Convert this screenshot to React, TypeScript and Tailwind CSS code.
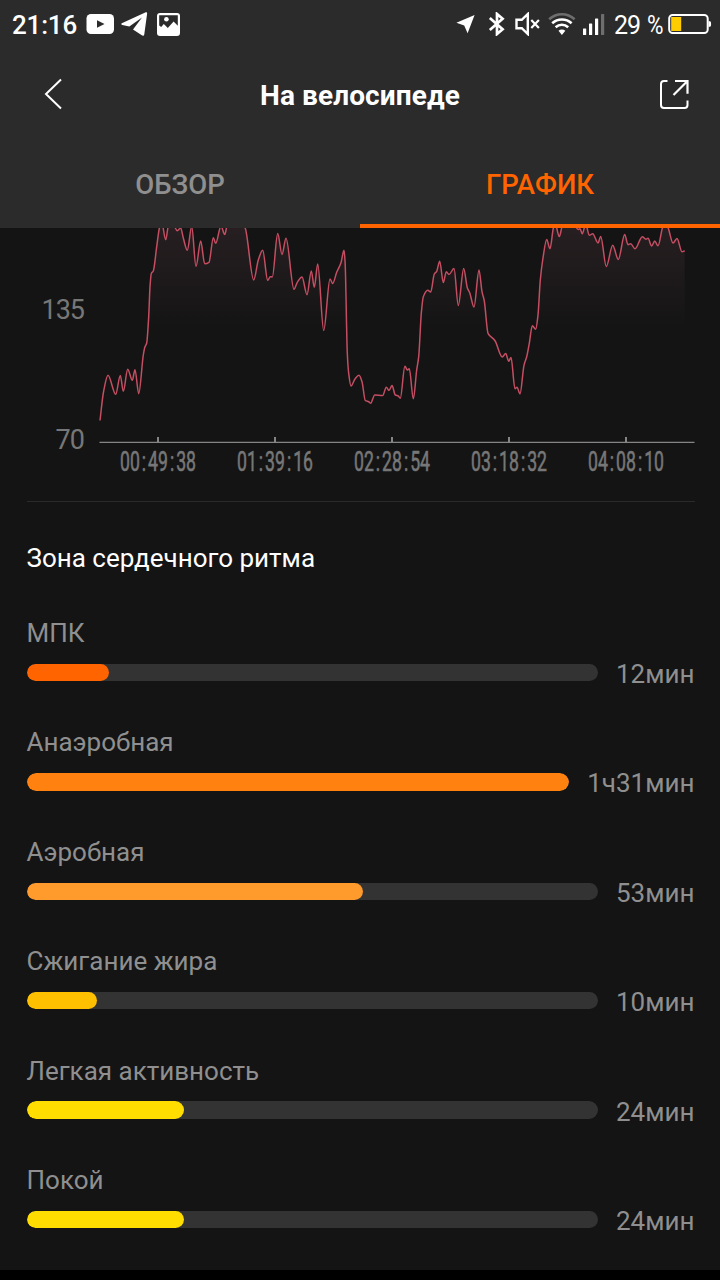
import clsx from "clsx"

interface Zone {
  name: string
  value: string
  percent: number
  color: string
}

const zones: Zone[] = [
  { name: "МПК", value: "12мин", percent: 14.5, color: "bg-[#ff6400]" },
  { name: "Анаэробная", value: "1ч31мин", percent: 100, color: "bg-[#ff8210]" },
  { name: "Аэробная", value: "53мин", percent: 58.9, color: "bg-[#ff9a2c]" },
  { name: "Сжигание жира", value: "10мин", percent: 12.4, color: "bg-[#ffc000]" },
  { name: "Легкая активность", value: "24мин", percent: 27.5, color: "bg-[#ffdd00]" },
  { name: "Покой", value: "24мин", percent: 27.5, color: "bg-[#ffdd00]" },
]

const timeLabels = [
  { x: 158, label: "00:49:38" },
  { x: 275, label: "01:39:16" },
  { x: 392, label: "02:28:54" },
  { x: 509, label: "03:18:32" },
  { x: 626, label: "04:08:10" },
]

// heart rate samples, the top of the curve is scrolled under the header
const samples: [number, number][] = [
  [100, 420.5], [103.5, 392], [108, 375.3], [115.7, 394.3], [120.3, 375.5], [123.3, 391.3], [127.7, 369.3],
  [132.3, 380.3], [135, 369.7], [138.7, 393.7], [143.3, 355], [144.7, 347.7], [146.7, 343], [148.7, 316.7],
  [150, 286.7], [151.3, 273.5], [153.3, 271], [156.7, 246.7], [159.3, 228.3], [161.5, 221], [165.7, 239.7],
  [168.5, 225], [172, 222], [177.3, 230.7], [180.7, 228], [183.3, 238], [187.3, 250.3], [191.7, 226.5],
  [196, 266.5], [200.7, 241], [204.7, 263.7], [209, 262.3], [213.3, 237.7], [215.7, 243.3], [221, 226],
  [224.7, 234.5], [228, 222], [241, 221], [245.3, 228.3], [253.7, 279.9], [258.3, 260], [262.7, 250.3],
  [267.7, 280.3], [270.3, 276.7], [272.3, 277], [277.7, 233.5], [282, 254.5], [286, 238.3], [294, 289.3],
  [297.3, 282.3], [302, 277], [307, 294.7], [311.3, 271], [314.3, 287.3], [317.7, 264], [323.7, 330.5],
  [330, 279], [332.7, 283.5], [336.7, 272.3], [341, 262.7], [344, 250.3], [345.1, 262], [347.3, 353.3],
  [348.7, 373.3], [351, 386], [355, 379], [359, 375.3], [362, 381.7], [365.3, 400.5], [368.7, 401.7],
  [370.7, 403.2], [374.7, 394.9], [382.7, 395.5], [386.3, 387.2], [389, 390.5], [392, 385.5], [395.3, 395],
  [398.3, 396], [400.3, 398.2], [404.9, 366.2], [407.3, 370], [409.3, 368.7], [413.3, 398.8], [416.7, 370],
  [418.7, 356.7], [421.3, 313.3], [423.3, 296.7], [427.7, 290.3], [430.7, 292], [434.3, 274], [436.7, 271.3],
  [439.7, 261.3], [443.3, 282.5], [446.3, 271.7], [449, 274.5], [454, 268.5], [458.3, 305.5], [463.7, 268.5],
  [467.3, 287.7], [469.7, 292.7], [474, 307], [479, 270], [482, 291.7], [484.3, 301], [488, 333.3],
  [495, 340.7], [502.3, 357], [505.7, 353.5], [508.7, 361.2], [511, 357.5], [515, 388.7], [517, 387.3],
  [520, 393.9], [524, 365.3], [526.7, 356.7], [529.3, 343.3], [532.3, 325.8], [535.7, 329.2], [538, 315],
  [540.3, 280], [542.7, 260], [546.7, 239.5], [550, 248.7], [553.3, 228.3], [555, 223], [559.3, 236.5],
  [562.7, 225], [573, 223], [578.3, 229.5], [580, 228.7], [582.3, 233.8], [585.7, 224], [589.3, 235.3],
  [592.7, 233.7], [598, 243], [600.7, 236.5], [606.3, 266.5], [612.7, 245.3], [618.3, 259.5], [624.7, 234.5],
  [628, 244.7], [630.7, 243.7], [635, 248.8], [642.3, 236.7], [646, 239.2], [648, 238.3], [651.7, 246],
  [654.7, 241], [658, 245.8], [662.7, 227], [665.5, 222], [668.3, 228.3], [673, 243], [677, 238.5],
  [682, 251.8], [684.7, 250.7],
]

// monotone cubic curve, flat at every peak and valley
function buildCurve(points: [number, number][]) {
  const slope = (i: number) => (points[i + 1][1] - points[i][1]) / (points[i + 1][0] - points[i][0])
  const tangents = points.map((_, i) => {
    if (i === 0) return slope(0)
    if (i === points.length - 1) return slope(i - 1)
    const a = slope(i - 1)
    const b = slope(i)
    return a * b <= 0 ? 0 : (2 * a * b) / (a + b)
  })
  let d = `M${points[0][0]} ${points[0][1]}`
  for (let i = 1; i < points.length; i++) {
    const [x0, y0] = points[i - 1]
    const [x1, y1] = points[i]
    const dx = (x1 - x0) / 3
    d += `C${x0 + dx} ${y0 + dx * tangents[i - 1]} ${x1 - dx} ${y1 - dx * tangents[i]} ${x1} ${y1}`
  }
  return d
}

const curve = buildCurve(samples)

function StatusBar() {
  return (
    <div className="flex h-12 items-center justify-between pl-3 pr-2 text-[26px] leading-none">
      <div className="flex items-center">
        <span className="w-[74px] pt-0.5 font-medium tracking-[-0.2px]">21:16</span>
        <svg width="28" height="24" viewBox="0 0 28 24">
          <rect x="0.5" y="2" width="27.5" height="20" rx="4.5" fill="#fff" />
          <path d="M11 8.3v7.4l7.5-3.7z" fill="#2b2b2b" />
        </svg>
        <svg className="ml-[7px]" width="27" height="26" viewBox="0 0 27 26">
          <path
            d="M.8 12.2 24.2 1.4c1.3-.5 2.1 0 1.9 1.4l-2.8 20.4c-.3 1.6-1.3 1.9-2.5 1.1L12 18.6l9-12.1-12.7 8.9-7-1.3c-1.2-.4-1.5-1.3-.5-1.9z"
            fill="#fff"
          />
        </svg>
        <svg className="ml-[9px]" width="24" height="24" viewBox="0 0 24 24">
          <rect x="0" y="1" width="23" height="23" rx="3" fill="#fff" />
          <path d="M2.2 3.2h18.6v10.6l-4.2-4.4-5.8 6.6-4-4-2.6 3-2-1.6z" fill="#2b2b2b" />
          <circle cx="9.4" cy="7.2" r="2.3" fill="#fff" />
        </svg>
      </div>
      <div className="flex items-center">
        <svg width="20" height="24" viewBox="0 0 20 24">
          <path d="M18.6 3 0.4 10.7l7.8 2.8 3.4 7.8z" fill="#fff" />
        </svg>
        <svg className="ml-[12px]" width="18" height="24" viewBox="0 0 18 24" fill="none" stroke="#fff" strokeWidth="2.7">
          <path d="M1.8 6 14.6 17.2 9 22V2l5.6 4.8L1.8 18" />
        </svg>
        <svg className="ml-[9px]" width="26" height="24" viewBox="0 0 26 24" fill="none" stroke="#fff">
          <path d="M1.5 7.8h5.3L12.8 2v20l-6-5.8H1.5z" strokeWidth="2.4" />
          <path d="m16.3 8 7.6 8M23.9 8l-7.6 8" strokeWidth="2.2" />
        </svg>
        <svg className="ml-[7px]" width="28" height="24" viewBox="0 0 28 24" fill="none" strokeWidth="2.6">
          <path d="M1.2 7.3C8.5.5 19.3.5 26.6 7.3" stroke="#6e6e6e" />
          <path d="M4.2 11.3c5.6-5.1 13.8-5.1 19.4 0M7.6 15.2c3.7-3.3 8.9-3.3 12.6 0" stroke="#fff" />
          <path d="M10.5 18.7c2-1.7 4.8-1.7 6.8 0L13.9 23z" fill="#fff" />
        </svg>
        <svg className="ml-[7px]" width="22" height="24" viewBox="0 0 22 24" fill="#fff">
          <rect x="0" y="16.5" width="3.2" height="6.5" rx="0.6" />
          <rect x="6" y="11.5" width="3.2" height="11.5" rx="0.6" />
          <rect x="12" y="6.5" width="3.2" height="16.5" rx="0.6" />
          <rect x="18" y="2" width="3.2" height="21" rx="0.6" fill="#6e6e6e" />
        </svg>
        <span className="ml-[9px] flex w-[54px] gap-[7px] whitespace-nowrap pt-0.5 text-[25px] tracking-[-1px]">
          <span>29</span>
          <span className="origin-left scale-x-90">%</span>
        </span>
        <svg width="44" height="24" viewBox="0 0 44 24">
          <rect x="1.2" y="3" width="38.5" height="18" rx="3.5" fill="none" stroke="#fff" strokeWidth="2" />
          <rect x="3.2" y="5" width="10" height="14" fill="#ffcc00" />
          <path d="M40.5 9c2 0 2.6.6 2.6 3s-.6 3-2.6 3z" fill="#fff" />
        </svg>
      </div>
    </div>
  )
}

function TitleBar() {
  return (
    <div className="grid h-[92px] grid-cols-[1fr_auto_1fr] items-center pl-11 pr-[31px]">
      <svg width="30" height="32" viewBox="0 0 30 32" fill="none" stroke="#fff" strokeWidth="2">
        <path d="M17 1.5 2 16l15 14.5" />
      </svg>
      <h1 className="-ml-[13px] pt-[3px] text-[28px] font-bold leading-none tracking-[0.1px]">На велосипеде</h1>
      <svg className="justify-self-end" width="30" height="30" viewBox="0 0 30 30" fill="none" stroke="#fff" strokeWidth="2">
        <path d="M8.5 2H5A3 3 0 0 0 2 5v21a3 3 0 0 0 3 3h20.5a3 3 0 0 0 3-3V21.5" />
        <path d="M16 2h12.5v12.8M28 2.5 14.5 16" strokeWidth="2.2" />
      </svg>
    </div>
  )
}

function Tabs() {
  return (
    <div className="flex h-[88px] text-[27.5px] font-medium leading-none">
      <button className="flex-1 border-b-4 border-transparent pt-1.5 text-[#8f8f8f]">ОБЗОР</button>
      <button className="flex-1 border-b-4 border-[#ff6400] pt-1.5 text-[#ff6400]">ГРАФИК</button>
    </div>
  )
}

// narrow digits with the colons set apart from them
function TimeLabel({ x, label }: { x: number; label: string }) {
  const [hours, minutes, seconds] = label.split(":")
  return (
    <text transform={`translate(${x} 470.7) scale(0.63 1)`} fontSize="28" fill="#777" stroke="#777" strokeWidth="0.6" textAnchor="middle">
      {hours}
      <tspan dx="3.2">:</tspan>
      <tspan dx="3.2">{minutes}</tspan>
      <tspan dx="3.2">:</tspan>
      <tspan dx="3.2">{seconds}</tspan>
    </text>
  )
}

function HeartRateChart() {
  return (
    <svg className="block" width="720" height="273" viewBox="0 228 720 273">
      <defs>
        <linearGradient id="fade" gradientUnits="userSpaceOnUse" x1="0" y1="228" x2="0" y2="330">
          <stop offset="0" stopColor="#ff9ab4" stopOpacity="0.08" />
          <stop offset="1" stopColor="#ff9ab4" stopOpacity="0" />
        </linearGradient>
      </defs>
      <path d={`${curve}V442H100z`} fill="url(#fade)" />
      <path d={curve} fill="none" stroke="#c54e63" strokeWidth="1.5" />
      <g fill="#777" fontSize="27" textAnchor="end">
        <text x="85" y="319" textLength="43.5">135</text>
        <text x="85" y="449" textLength="29.5">70</text>
      </g>
      <path d="M99.5 442.4H694.5" stroke="#858585" strokeWidth="1.2" />
      {timeLabels.map(({ x, label }) => (
        <g key={label}>
          <path d={`M${x} 437v5`} stroke="#858585" strokeWidth="2" />
          <TimeLabel x={x} label={label} />
        </g>
      ))}
    </svg>
  )
}

function ZoneRow({ zone }: { zone: Zone }) {
  return (
    <div className="h-[109.4px] text-[26px] text-[#8f8f8f]">
      <p className="leading-[30px]">{zone.name}</p>
      <div className="mt-[11px] flex h-[28px] items-center gap-[18px]">
        <div className="mb-px h-[17.5px] flex-1 overflow-hidden rounded-full bg-[#333]">
          <div className={clsx("h-full rounded-full", zone.color)} style={{ width: `${zone.percent}%` }} />
        </div>
        <span className="pt-0.5 leading-none">{zone.value}</span>
      </div>
    </div>
  )
}

export default function App() {
  return (
    <div className="flex h-[1280px] w-[720px] flex-col overflow-hidden bg-black font-['Roboto',sans-serif] text-white">
      <header className="shrink-0 bg-[#2b2b2b]">
        <StatusBar />
        <TitleBar />
        <Tabs />
      </header>
      <main className="h-[1042px] shrink-0 overflow-hidden bg-[#141414]">
        <HeartRateChart />
        <section className="ml-[26.5px] mr-[25.5px] border-t border-[#2a2a2a]">
          <h2 className="mt-10 text-[26px] leading-[32px]">Зона сердечного ритма</h2>
          <div className="mt-11">
            {zones.map((zone) => (
              <ZoneRow key={zone.name} zone={zone} />
            ))}
          </div>
        </section>
      </main>
    </div>
  )
}
